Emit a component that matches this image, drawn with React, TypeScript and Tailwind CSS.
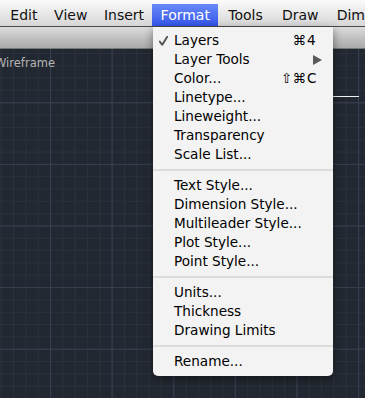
import React from "react";

type Item = { label: string; shortcut?: [string, string]; checked?: boolean; submenu?: boolean };

const groups: Item[][] = [
  [
    { label: "Layers", shortcut: ["⌘", "4"], checked: true },
    { label: "Layer Tools", submenu: true },
    { label: "Color...", shortcut: ["⇧⌘", "C"] },
    { label: "Linetype..." },
    { label: "Lineweight..." },
    { label: "Transparency" },
    { label: "Scale List..." },
  ],
  [
    { label: "Text Style..." },
    { label: "Dimension Style..." },
    { label: "Multileader Style..." },
    { label: "Plot Style..." },
    { label: "Point Style..." },
  ],
  [{ label: "Units..." }, { label: "Thickness" }, { label: "Drawing Limits" }],
  [{ label: "Rename..." }],
];

// widths picked so each title sits where the screenshot has it
const menus = [
  { name: "Edit", w: "w-[44px]" },
  { name: "View", w: "w-[50px]" },
  { name: "Insert", w: "w-[57px]" },
  { name: "Format", w: "w-[66px]" },
  { name: "Tools", w: "w-[55px]" },
  { name: "Draw", w: "w-[55px]" },
];

const MenuRow: React.FC<{ item: Item }> = ({ item }) => (
  <div className="relative flex h-[19px] items-center pl-[21px] pr-[12px] text-black">
    {item.checked && (
      <svg className="absolute left-[6px] top-[5px]" width="9" height="10" viewBox="0 0 9 10">
        <path d="M0.8 5.6 L3.3 8.8 L8.2 0.8" fill="none" stroke="#555" strokeWidth="1.9" strokeLinecap="round" strokeLinejoin="round" />
      </svg>
    )}
    <span className="flex-1">{item.label}</span>
    {item.shortcut && (
      <span className="flex">
        <span>{item.shortcut[0]}</span>
        <span className="ml-[1px] w-[14px]">{item.shortcut[1]}</span>
      </span>
    )}
    {item.submenu && (
      <svg className="mr-[-1px]" width="9" height="10" viewBox="0 0 9 10">
        <path d="M0 0 L9 5 L0 10 Z" fill="#5a5a5a" />
      </svg>
    )}
  </div>
);

export default function App() {
  return (
    <div
      className="relative flex h-[398px] w-[365px] flex-col overflow-hidden bg-[#222831]"
      style={{ fontFamily: '"DejaVu Sans", "Noto Sans", sans-serif' }}
    >
      {/* menu bar */}
      <div className="flex h-[27px] shrink-0 items-end border-b border-[#4a4a4a] bg-gradient-to-b from-[#fbfbfb] to-[#d6d6d6] pl-[2px] text-[14px]">
        {menus.map((m) => (
          <div
            key={m.name}
            className={
              m.name === "Format"
                ? `flex h-[22px] items-center justify-center bg-gradient-to-b from-[#6a89f8] to-[#3454e9] text-white ${m.w}`
                : `flex h-[22px] items-center justify-center text-[#111] ${m.w}`
            }
          >
            {m.name}
          </div>
        ))}
        <div className="flex h-[22px] items-center whitespace-nowrap pl-[9px] text-[#111]">Dim</div>
      </div>

      {/* toolbar band */}
      <div className="h-[22px] shrink-0 border-b border-[#777] bg-gradient-to-b from-[#dcdcdc] to-[#a9a9a9]" />

      {/* drawing canvas */}
      <div className="relative flex-1">
        <svg className="absolute inset-0" width="100%" height="100%">
          <defs>
            <pattern id="minor" patternUnits="userSpaceOnUse" x="0.7" y="4" width="12.32" height="12.32">
              <path d="M0 0.5 H12.32 M0.5 0 V12.32" stroke="#2b313b" strokeWidth="1" fill="none" />
            </pattern>
            <pattern id="major" patternUnits="userSpaceOnUse" x="50" y="53.3" width="61.6" height="61.6">
              <path d="M0 0.5 H61.6 M0.5 0 V61.6" stroke="#383e51" strokeWidth="1" fill="none" />
            </pattern>
          </defs>
          <rect width="100%" height="100%" fill="url(#minor)" />
          <rect width="100%" height="100%" fill="url(#major)" />
          <line x1="286" y1="47.5" x2="359" y2="47.5" stroke="#f2f2f2" strokeWidth="1" />
        </svg>
        <div className="relative ml-[-5px] mt-[6px] text-[11.5px] text-[#b4b4b4]">Wireframe</div>
      </div>

      {/* Format dropdown */}
      <div className="absolute left-[153px] top-[27px] w-[180px] rounded-b-[5px] bg-[#f3f3f3] pb-[5px] pt-[4px] text-[13.6px] shadow-[0_3px_10px_rgba(0,0,0,0.45)]">
        {groups.map((g, i) => (
          <div key={i}>
            {i > 0 && <div className="my-[5px] h-[2px] bg-[#dcdcdc]" />}
            {g.map((item) => (
              <MenuRow key={item.label} item={item} />
            ))}
          </div>
        ))}
      </div>
    </div>
  );
}
